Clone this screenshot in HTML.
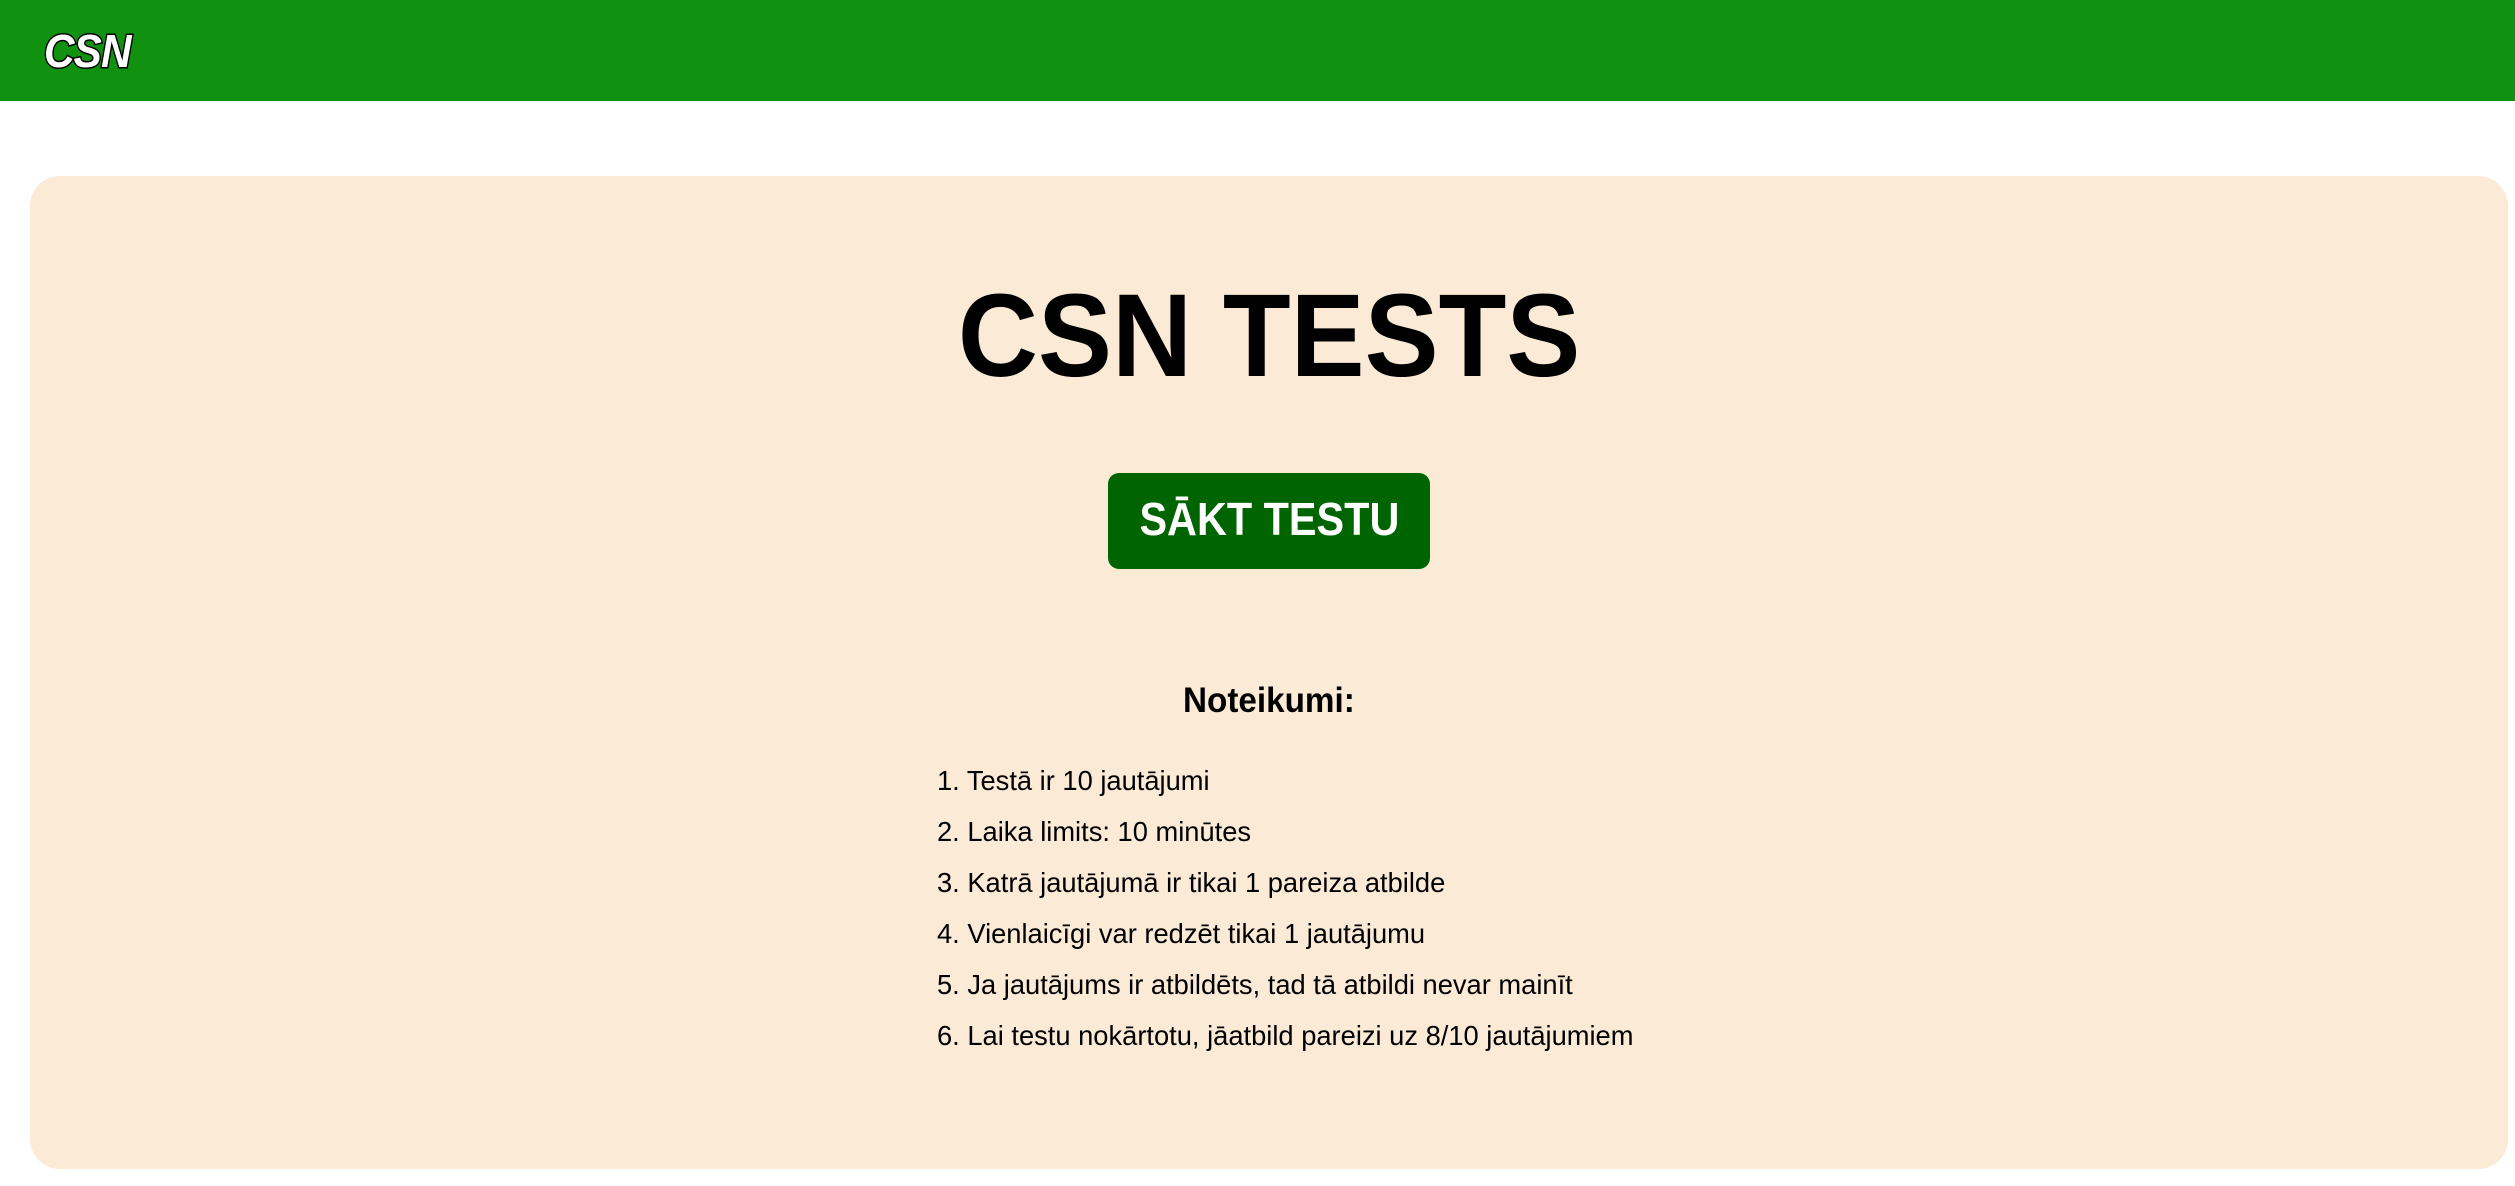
<!DOCTYPE html>
<html><head><meta charset="utf-8">
<style>
html,body{margin:0;padding:0;width:2515px;height:1186px;background:#fff;overflow:hidden;font-family:"Liberation Sans",Arial,sans-serif;}
.hdr{position:absolute;left:0;top:0;width:2515px;height:101px;background:#109110;}
.logo{position:absolute;left:44px;top:28px;font-size:46px;line-height:46px;font-weight:bold;font-style:italic;color:#fff;-webkit-text-stroke:3px #000;paint-order:stroke fill;transform:scaleX(0.92);transform-origin:left;letter-spacing:-1px;}
.card{position:absolute;left:30px;top:176px;width:2478px;height:993px;background:#faead6;border-radius:30px;}
.abs{position:absolute;white-space:nowrap;}
.title{left:0;width:2538px;text-align:center;top:277px;font-size:118px;line-height:118px;font-weight:bold;color:#000;}
.title span{display:inline-block;transform:scaleX(0.94);}
.btn{position:absolute;left:1108px;top:473px;width:322px;height:96px;background:#006400;border-radius:11px;}
.btntxt{left:1108px;width:322px;text-align:center;top:496px;font-size:46px;line-height:46px;font-weight:bold;color:#fff;}
.btntxt span{display:inline-block;transform:scaleX(0.9);}
.note{left:1183px;top:683px;font-size:35px;line-height:36px;font-weight:bold;color:#000;transform:scaleX(0.95);transform-origin:left;}
.li{left:937px;font-size:27.3px;line-height:27px;color:#000;}
</style></head><body>
<div class="hdr"><div class="logo">CSN</div></div>
<div class="card"></div>
<div class="abs title"><span>CSN TESTS</span></div>
<div class="btn"></div>
<div class="abs btntxt"><span>SĀKT TESTU</span></div>
<div class="abs note">Noteikumi:</div>
<div class="abs li" style="top:767px">1. Testā ir 10 jautājumi</div>
<div class="abs li" style="top:818px">2. Laika limits: 10 minūtes</div>
<div class="abs li" style="top:869px">3. Katrā jautājumā ir tikai 1 pareiza atbilde</div>
<div class="abs li" style="top:920px">4. Vienlaicīgi var redzēt tikai 1 jautājumu</div>
<div class="abs li" style="top:971px">5. Ja jautājums ir atbildēts, tad tā atbildi nevar mainīt</div>
<div class="abs li" style="top:1022px">6. Lai testu nokārtotu, jāatbild pareizi uz 8/10 jautājumiem</div>
</body></html>
